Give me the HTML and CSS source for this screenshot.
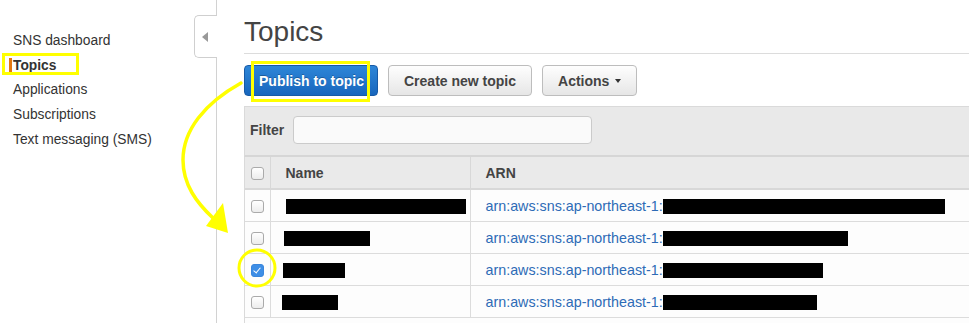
FILE: index.html
```html
<!DOCTYPE html>
<html lang="en">
  <head>
    <meta charset="UTF-8" />
    <meta name="viewport" content="width=device-width, initial-scale=1.0" />
    <title>SNS - Topics</title>
    <link rel="stylesheet" href="styles.css">
  </head>

  <body>
    <div class="page">
      <aside class="sidebar">
        <a class="collapse_tab"><span class="collapse_arrow"></span></a>
        <ul class="nav">
          <li class="nav_item"><a>SNS dashboard</a></li>
          <li class="nav_item active"><a>Topics</a></li>
          <li class="nav_item"><a>Applications</a></li>
          <li class="nav_item"><a>Subscriptions</a></li>
          <li class="nav_item"><a>Text messaging (SMS)</a></li>
        </ul>
      </aside>

      <main class="content">
        <h1 class="page_title">Topics</h1>

        <div class="toolbar">
          <button class="btn btn_primary">Publish to topic</button>
          <button class="btn">Create new topic</button>
          <button class="btn">Actions <span class="caret"></span></button>
        </div>

        <div class="filter_bar">
          <label class="filter_label">Filter</label>
          <input class="filter_input" type="text" />
        </div>

        <div class="table_wrap">
          <table class="topic_table">
            <colgroup>
              <col class="col_check" />
              <col class="col_name" />
              <col />
            </colgroup>
            <thead>
              <tr>
                <th class="cell_check"><span class="cb"></span></th>
                <th>Name</th>
                <th>ARN</th>
              </tr>
            </thead>
            <tbody>
              <tr>
                <td class="cell_check"><span class="cb"></span></td>
                <td><span class="redact" style="width:180px"></span></td>
                <td><a class="arn">arn:aws:sns:ap-northeast-1:</a><span class="redact" style="width:282px"></span></td>
              </tr>
              <tr>
                <td class="cell_check"><span class="cb"></span></td>
                <td><span class="redact" style="width:86px; margin-left:-2px"></span></td>
                <td><a class="arn">arn:aws:sns:ap-northeast-1:</a><span class="redact" style="width:185px"></span></td>
              </tr>
              <tr>
                <td class="cell_check"><span class="cb checked"></span></td>
                <td><span class="redact" style="width:62px; margin-left:-3px"></span></td>
                <td><a class="arn">arn:aws:sns:ap-northeast-1:</a><span class="redact" style="width:160px"></span></td>
              </tr>
              <tr>
                <td class="cell_check"><span class="cb"></span></td>
                <td><span class="redact" style="width:56px; margin-left:-4px"></span></td>
                <td><a class="arn">arn:aws:sns:ap-northeast-1:</a><span class="redact" style="width:154px"></span></td>
              </tr>
            </tbody>
          </table>
        </div>
      </main>

      <!-- yellow markup drawn over the screenshot -->
      <svg class="annotations" width="969" height="323" viewBox="0 0 969 323">
        <g fill="none" stroke="#ffff00" stroke-width="3">
          <rect x="3.5" y="54.5" width="74" height="19" />
          <rect x="252.5" y="62.5" width="116" height="38" />
          <path d="M241,83 C205,103 183,130 183,160 C183,185 197,203 213,218" stroke-width="3.5" stroke-linecap="round" />
          <circle cx="257" cy="268" r="18" />
        </g>
        <polygon points="206,226 223,203 228,233" fill="#ffff00" />
      </svg>
    </div>
  </body>
</html>
```

FILE: styles.css
```css
html,
body {
  margin: 0;
  padding: 0;
  background: #fff;
}

body {
  font-family: "Liberation Sans", Arial, Helvetica, sans-serif;
  font-size: 14px;
  color: #333;
}

.page {
  position: relative;
  display: flex;
  height: 323px;
  overflow: hidden;
}

/* sidebar */
.sidebar {
  position: relative;
  flex: 0 0 216px;
  border-right: 1px solid #d2d2d2;
}

.collapse_tab {
  position: absolute;
  top: 15px;
  right: -1px;
  width: 22px;
  height: 41px;
  display: flex;
  align-items: center;
  justify-content: center;
  background: #fff;
  border: 1px solid #cfcfcf;
  border-right: none;
  border-radius: 5px 0 0 5px;
}

.collapse_arrow {
  width: 0;
  height: 0;
  margin-right: 3px;
  border-top: 5px solid transparent;
  border-bottom: 5px solid transparent;
  border-right: 6px solid #999;
}

.nav {
  list-style: none;
  margin: 0;
  padding: 28px 0 0 0;
}

.nav_item {
  display: flex;
  align-items: center;
  height: 24.8px;
  padding-left: 13px;
  font-size: 13.8px;
  color: #333;
}

.nav_item.active {
  padding-left: 9px;
  font-weight: bold;
}

.nav_item.active::before {
  content: "";
  display: inline-block;
  width: 3px;
  height: 15px;
  margin-right: 1px;
  background: #e47911;
}

/* main */
.content {
  flex: 1;
  min-width: 0;
  padding: 17px 0 0 27px;
}

.page_title {
  margin: 0;
  padding-bottom: 6px;
  font-size: 28px;
  line-height: 30px;
  font-weight: normal;
  color: #444;
  border-bottom: 1px solid #dcdcdc;
}

.toolbar {
  display: flex;
  gap: 10px;
  margin-top: 11px;
}

.btn {
  display: inline-flex;
  align-items: center;
  gap: 6px;
  height: 31px;
  padding: 0 15px;
  font-family: inherit;
  font-size: 14px;
  font-weight: bold;
  color: #444;
  background: linear-gradient(#fefefe, #e6e6e6);
  border: 1px solid #bdbdbd;
  border-radius: 4px;
}

.btn_primary {
  padding: 0 13px 0 14px;
  color: #fff;
  text-shadow: 0 -1px 0 rgba(0, 0, 0, 0.25);
  background: linear-gradient(#2d86d8, #1866bd);
  border-color: #175aa6;
}

.caret {
  width: 0;
  height: 0;
  border-left: 3.5px solid transparent;
  border-right: 3.5px solid transparent;
  border-top: 4px solid #333;
}

.filter_bar {
  display: flex;
  align-items: center;
  gap: 9px;
  margin-top: 10px;
  padding: 9px 0 11px 5px;
  background: #e9e9e9;
  border-top: 1px solid #dadada;
  border-left: 1px solid #dadada;
  border-bottom: 2px solid #d6d6d6;
}

.filter_label {
  font-weight: bold;
  color: #444;
}

.filter_input {
  width: 299px;
  height: 28px;
  box-sizing: border-box;
  background: #fafafa;
  border: 1px solid #cbcbcb;
  border-radius: 4px;
}

/* table */
.table_wrap {
  height: 200px;
  background: #fdfdfd;
  border-left: 1px solid #dadada;
}

.topic_table {
  width: 100%;
  table-layout: fixed;
  border-collapse: collapse;
}

.col_check {
  width: 25px;
}

.col_name {
  width: 200px;
}

.topic_table th {
  height: 31px;
  padding: 0 0 0 15px;
  text-align: left;
  font-weight: bold;
  color: #444;
  background: #eaeaea;
  border-bottom: 2px solid #d8d8d8;
  border-right: 1px solid #d8d8d8;
}

.topic_table th:last-child,
.topic_table td:last-child {
  border-right: none;
}

.topic_table td {
  height: 31px;
  padding: 0 0 0 15px;
  background: #fdfdfd;
  border-bottom: 1px solid #dcdcdc;
  border-right: 1px solid #dcdcdc;
  white-space: nowrap;
  overflow: hidden;
}

.topic_table .cell_check {
  padding: 0;
  text-align: center;
}

.cb {
  display: inline-block;
  vertical-align: middle;
  width: 11px;
  height: 11px;
  border: 1px solid #aaa;
  border-radius: 3px;
  background: linear-gradient(#fff, #ececec);
}

.cb.checked {
  position: relative;
  border-color: #3a86dc;
  background: #3d8ee6;
}

.cb.checked::after {
  content: "";
  position: absolute;
  left: 3.5px;
  top: 1px;
  width: 3px;
  height: 6px;
  border-right: 1.5px solid #fff;
  border-bottom: 1.5px solid #fff;
  transform: rotate(40deg);
}

.redact {
  display: inline-block;
  vertical-align: middle;
  height: 15px;
  background: #000;
}

.arn {
  vertical-align: middle;
  font-size: 14.3px;
  color: #2d6bb6;
}

.annotations {
  position: absolute;
  left: 0;
  top: 0;
  pointer-events: none;
}
```
